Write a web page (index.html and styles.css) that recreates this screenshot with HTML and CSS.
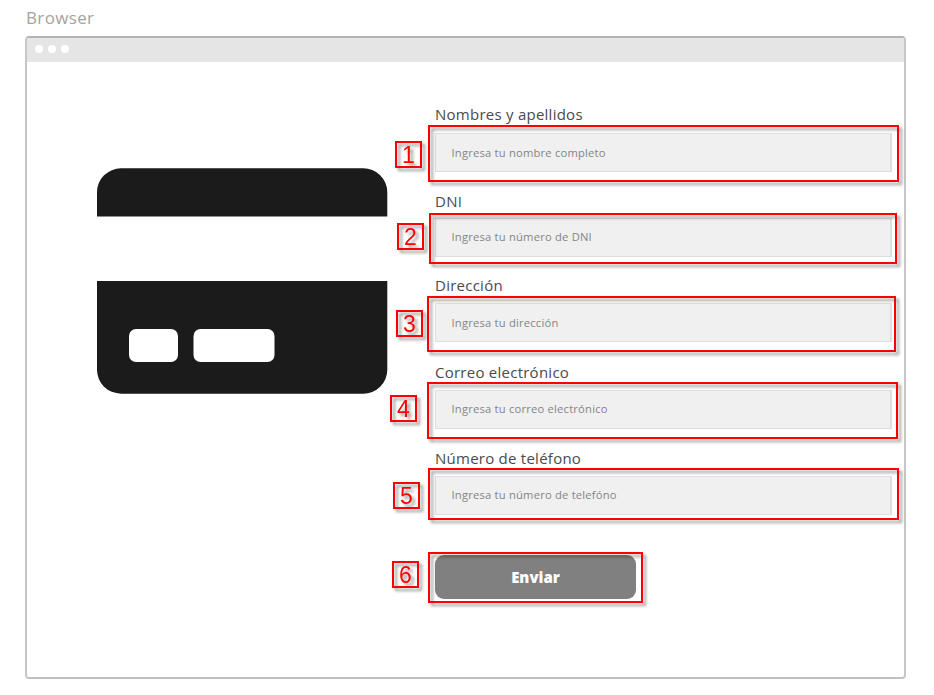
FILE: index.html
```html
<!DOCTYPE html>
<html lang="es">
<head>
<meta charset="utf-8">
<title>Browser</title>
<link rel="stylesheet" href="styles.css">
</head>
<body>
<div class="caption">Browser</div>
<main class="window">
  <div class="titlebar"><i class="dot"></i><i class="dot"></i><i class="dot"></i></div>
  <div class="content">
    <svg class="card" width="292" height="228" viewBox="0 0 292 228" fill="#1b1b1b" aria-hidden="true">
      <path d="M1 49.500V25.300A24 24 0 0 1 25 1.300H267A24 24 0 0 1 291.300 25.300V49.500Z"/>
      <path d="M1 114H291.300V202.700A24 24 0 0 1 267 226.700H25A24 24 0 0 1 1 202.700Z"/>
      <rect x="33" y="162" width="49" height="33" rx="7" fill="#fff"/>
      <rect x="97.500" y="162" width="81" height="33" rx="7" fill="#fff"/>
    </svg>
    <form class="form">
      <div class="field field-name">
        <label class="label">Nombres y apellidos</label>
        <div class="input">Ingresa tu nombre completo</div>
      </div>
      <div class="field field-dni">
        <label class="label">DNI</label>
        <div class="input">Ingresa tu número de DNI</div>
      </div>
      <div class="field field-address">
        <label class="label">Dirección</label>
        <div class="input">Ingresa tu dirección</div>
      </div>
      <div class="field field-mail">
        <label class="label">Correo electrónico</label>
        <div class="input">Ingresa tu correo electrónico</div>
      </div>
      <div class="field field-phone">
        <label class="label">Número de teléfono</label>
        <div class="input">Ingresa tu número de telefóno</div>
      </div>
      <button class="submit" type="button">Enviar</button>
    </form>
  </div>
</main>
<div class="mark frame f1"></div><div class="mark badge b1">1</div>
<div class="mark frame f2"></div><div class="mark badge b2">2</div>
<div class="mark frame f3"></div><div class="mark badge b3">3</div>
<div class="mark frame f4"></div><div class="mark badge b4">4</div>
<div class="mark frame f5"></div><div class="mark badge b5">5</div>
<div class="mark frame f6"></div><div class="mark badge b6">6</div>
</body>
</html>
```
FILE: styles.css
```css
* { box-sizing: border-box; }
body {
  margin: 0;
  height: 695px;
  position: relative;
  overflow: hidden;
  background: #fff;
  font-family: "Open Sans", sans-serif;
}
.caption {
  height: 36px;
  padding: 6px 0 0 26px;
  font-size: 17px;
  line-height: 24px;
  letter-spacing: 0.35px;
  color: #a3a3a3;
}
.window {
  width: 881px;
  height: 643px;
  margin-left: 25px;
  border: 2px solid #c6c6c6;
  border-top-color: #b4b4b4;
  border-bottom-color: #c0c0c0;
  border-radius: 4px;
  background: #fff;
}
.titlebar {
  display: flex;
  align-items: center;
  gap: 5px;
  height: 24px;
  padding: 0 0 2px 8px;
  background: #e5e5e5;
}
.dot { width: 8px; height: 8px; border-radius: 50%; background: #fff; }
.content { display: flex; align-items: flex-start; gap: 47px; padding: 43px 0 0 69px; }
.card { margin-top: 62px; flex: none; }
.form { display: flex; flex-direction: column; width: 457px; }
.field { display: flex; flex-direction: column; justify-content: space-between; }
.field-name { height: 67px; margin-bottom: 20px; }
.field-dni { height: 65px; margin-bottom: 19px; }
.field-address { height: 66px; margin-bottom: 20px; }
.field-mail { height: 67px; margin-bottom: 19px; }
.field-phone { height: 67px; margin-bottom: 40px; }
.label { font-size: 15px; line-height: 19px; letter-spacing: 0.25px; color: #4a4a4a; white-space: nowrap; }
.field-mail .label, .field-phone .label { line-height: 20px; }
.input {
  display: flex;
  align-items: center;
  height: 39px;
  padding: 0 0 1px 15.5px;
  border: 2px solid #dedede;
  border-width: 1px 2px 1px 1px;
  background: #f0f0f0;
  font-size: 11.2px;
  letter-spacing: 0.21px;
  color: #858585;
}
.field-dni .input { padding-bottom: 3px; }
.field-mail .input, .field-phone .input { padding-bottom: 2px; }
.submit {
  width: 201px;
  height: 44px;
  padding: 0;
  border: 0;
  border-radius: 9px;
  background: #808080;
  color: #fff;
  font: 800 15px/44px "Open Sans", sans-serif;
}

/* Annotations laid over the form */
.mark {
  position: absolute;
  border: 2px solid #f00;
  filter: drop-shadow(3px 3px 1.5px rgba(0, 0, 0, 0.4));
}
.badge {
  width: 27px;
  height: 27px;
  font: 23px/25px "Liberation Sans", Arial, sans-serif;
  text-align: center;
  color: #f00;
}
.f1 { left: 428px; top: 125px; width: 471px; height: 57px; }
.f2 { left: 429px; top: 213px; width: 468px; height: 51px; }
.f3 { left: 427px; top: 296px; width: 469px; height: 56px; }
.f4 { left: 427px; top: 382px; width: 471px; height: 57px; }
.f5 { left: 428px; top: 468px; width: 471px; height: 52px; }
.f6 { left: 428px; top: 552px; width: 215px; height: 51px; }
.b1 { left: 395px; top: 141px; }
.b2 { left: 397px; top: 223px; }
.b3 { left: 396px; top: 310px; }
.b4 { left: 390px; top: 395px; }
.b5 { left: 393px; top: 482px; }
.b6 { left: 392px; top: 561px; }
```
